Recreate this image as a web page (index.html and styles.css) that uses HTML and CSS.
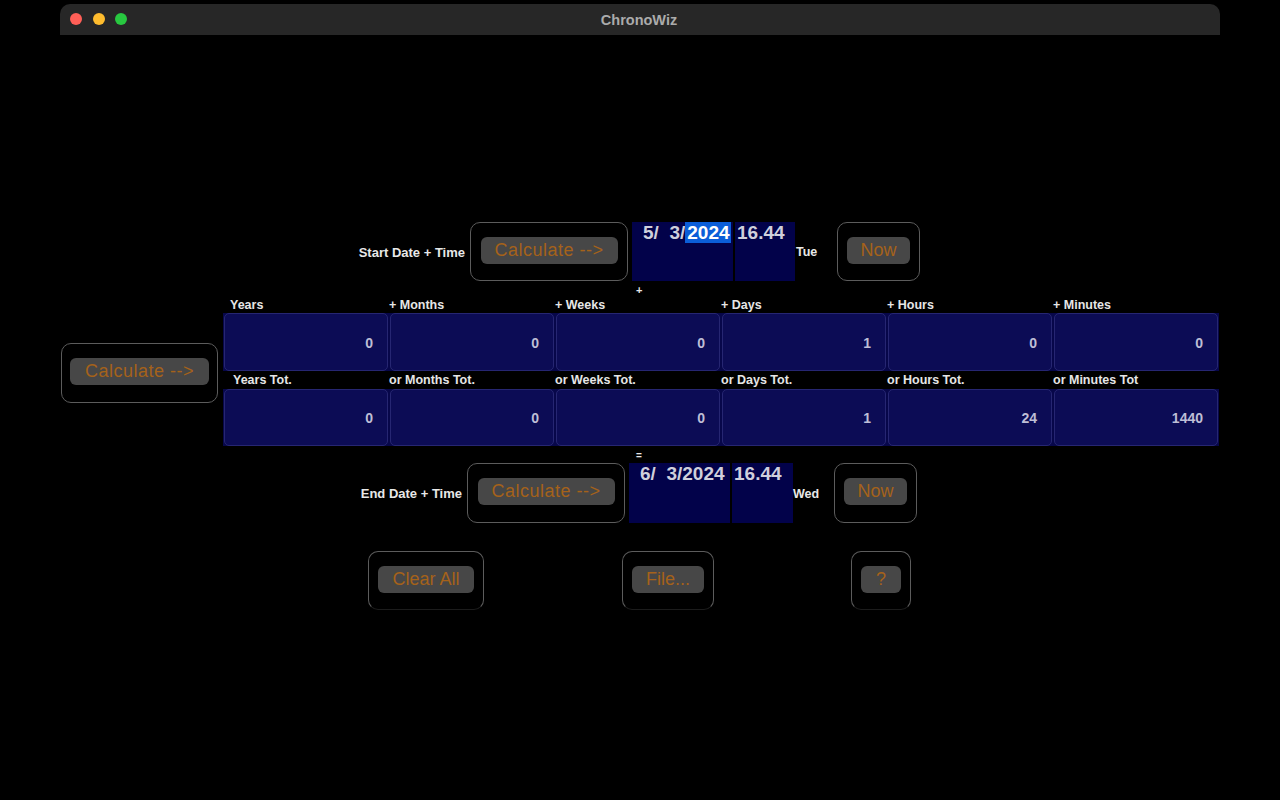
FILE: index.html
```html
<!DOCTYPE html>
<html>
<head>
<meta charset="utf-8">
<title>ChronoWiz</title>
<link rel="stylesheet" href="styles.css">
</head>
<body>
<div class="window">
  <div class="titlebar">
    <div class="lights">
      <span class="light red"></span>
      <span class="light yellow"></span>
      <span class="light green"></span>
    </div>
    <div class="title">ChronoWiz</div>
  </div>
  <div class="content">
    <div class="daterow start">
      <div class="rowlabel">Start Date + Time</div>
      <div class="box calcbox"><button class="btn calc">Calculate --&gt;</button></div>
      <div class="datefields">
        <div class="field date">5/  3/<span class="sel">2024</span></div>
        <div class="field time">16.44</div>
      </div>
      <div class="day">Tue</div>
      <div class="box nowbox"><button class="btn now">Now</button></div>
    </div>
    <div class="sign plus">+</div>

    <div class="middle">
      <div class="box leftcalc"><button class="btn calc wide">Calculate --&gt;</button></div>
      <div class="grid">
        <div class="labels first">
          <div class="lab l1">Years</div>
          <div class="lab">+ Months</div>
          <div class="lab">+ Weeks</div>
          <div class="lab">+ Days</div>
          <div class="lab">+ Hours</div>
          <div class="lab">+ Minutes</div>
        </div>
        <div class="cells">
          <div class="cell">0</div>
          <div class="cell">0</div>
          <div class="cell">0</div>
          <div class="cell">1</div>
          <div class="cell">0</div>
          <div class="cell">0</div>
        </div>
        <div class="labels second">
          <div class="lab l1b">Years Tot.</div>
          <div class="lab">or Months Tot.</div>
          <div class="lab">or Weeks Tot.</div>
          <div class="lab">or Days Tot.</div>
          <div class="lab">or Hours Tot.</div>
          <div class="lab">or Minutes Tot</div>
        </div>
        <div class="cells lower">
          <div class="cell">0</div>
          <div class="cell">0</div>
          <div class="cell">0</div>
          <div class="cell">1</div>
          <div class="cell">24</div>
          <div class="cell">1440</div>
        </div>
      </div>
    </div>

    <div class="sign equals">=</div>
    <div class="daterow end">
      <div class="rowlabel">End Date + Time</div>
      <div class="box calcbox"><button class="btn calc">Calculate --&gt;</button></div>
      <div class="datefields">
        <div class="field date">6/  3/2024</div>
        <div class="field time">16.44</div>
      </div>
      <div class="day">Wed</div>
      <div class="box nowbox"><button class="btn now">Now</button></div>
    </div>

    <div class="bottomrow">
      <div class="box open clearbox"><button class="btn clear">Clear All</button></div>
      <div class="box open filebox"><button class="btn file">File...</button></div>
      <div class="box open helpbox"><button class="btn help">?</button></div>
    </div>
  </div>
</div>
</body>
</html>
```

FILE: styles.css
```css
html, body {
  margin: 0;
  padding: 0;
  background: #000;
}
body {
  font-family: "Liberation Sans", Arial, sans-serif;
  color: #e6e6e6;
  width: 1280px;
  height: 800px;
  overflow: hidden;
}
.window {
  margin-left: 60px;
  margin-top: 4px;
  width: 1160px;
  height: 796px;
  background: #000;
}
.titlebar {
  position: relative;
  height: 31px;
  background: #272727;
  border-radius: 10px 10px 0 0;
  display: flex;
  align-items: center;
  justify-content: center;
}
.lights {
  position: absolute;
  left: 10px;
  top: 9px;
  display: flex;
  gap: 10.5px;
}
.light {
  width: 12px;
  height: 12px;
  border-radius: 50%;
  display: block;
}
.red { background: #ff5f57; }
.yellow { background: #febc2e; }
.green { background: #28c840; }
.title {
  font-size: 14.5px;
  font-weight: bold;
  color: #ababab;
  margin-left: -2px;
}
.content {
  padding-top: 187px;
}

/* boxes & buttons */
.box {
  box-sizing: border-box;
  border: 1px solid #5c5c5c;
  border-radius: 10px;
  display: flex;
  align-items: center;
  justify-content: center;
  padding-bottom: 3px;
}
.box.open {
  border-bottom-color: #1c1c1c;
}
.btn {
  font-family: "Liberation Sans", Arial, sans-serif;
  font-size: 18px;
  color: #a5621a;
  background: #474747;
  border: none;
  border-radius: 6px;
  height: 27px;
  padding: 0;
  margin: 0;
  line-height: 27px;
}
.btn.calc { width: 137px; letter-spacing: 0.5px; }
.btn.calc.wide { width: 139px; }
.btn.now { width: 63px; }
.btn.clear { width: 96px; }
.btn.file { width: 72px; }
.btn.help { width: 40px; }

/* date rows */
.daterow {
  display: flex;
  align-items: stretch;
  height: 59px;
}
.daterow.start { padding-left: 285px; }
.daterow.end { padding-left: 282px; height: 60px; }
.rowlabel {
  width: 120px;
  text-align: right;
  font-size: 13px;
  font-weight: bold;
  color: #e8e8e8;
  display: flex;
  align-items: center;
  justify-content: flex-end;
  padding-top: 1px;
}
.calcbox {
  width: 158px;
  margin-left: 5px;
}
.datefields {
  display: flex;
  gap: 2px;
  margin-left: 4px;
}
.field {
  background: #02024a;
  font-size: 19px;
  font-weight: bold;
  color: #cfcfdc;
  line-height: 22px;
  white-space: pre;
}
.field.date {
  width: 101px;
  box-sizing: border-box;
  padding-left: 11px;
}
.field.time {
  width: 60px;
  box-sizing: border-box;
  padding-left: 2px;
}
.end .field.time { width: 61px; }
.sel {
  background: #0b5ed8;
  color: #fff;
  padding: 0 1px 0 2px;
}
.day {
  width: 42px;
  font-size: 12.5px;
  font-weight: bold;
  color: #e8e8e8;
  display: flex;
  align-items: center;
  padding-left: 1px;
  box-sizing: border-box;
  padding-top: 1px;
}
.end .day { width: 41px; padding-left: 0; padding-top: 2px; }
.nowbox {
  width: 83px;
}

.sign {
  font-size: 11px;
  font-weight: bold;
  color: #e8e8e8;
  padding-left: 576px;
}
.sign.plus { height: 18px; line-height: 18px; }
.sign.equals { height: 17px; line-height: 19px; font-size: 10px; }

/* middle */
.middle {
  display: flex;
  align-items: center;
}
.leftcalc {
  width: 157px;
  height: 60px;
  margin-left: 1px;
  margin-right: 5px;
}
.grid {
  width: 996px;
}
.labels {
  display: grid;
  grid-template-columns: repeat(6, 166px);
  font-size: 12.5px;
  font-weight: bold;
  color: #e6e6e6;
}
.labels.first { height: 14px; line-height: 12px; }
.labels.second { height: 18px; line-height: 18px; }
.lab { padding-left: 0; white-space: nowrap; }
.lab.l1 { padding-left: 7px; }
.lab.l1b { padding-left: 10px; }
.cells {
  display: grid;
  grid-template-columns: repeat(6, 164px);
  gap: 2px;
  background: #07074a;
  padding: 0 1px;
  height: 58px;
}
.cells.lower { height: 57px; }
.cell {
  box-sizing: border-box;
  background: #0c0c55;
  border: 1px solid #262672;
  border-radius: 5px;
  display: flex;
  align-items: center;
  justify-content: flex-end;
  padding-right: 14px;
  font-size: 14px;
  font-weight: bold;
  color: #bebed6;
  padding-top: 1px;
}

/* bottom */
.bottomrow {
  display: flex;
  gap: 138px;
  padding-left: 308px;
  margin-top: 28px;
  height: 59px;
}
.bottomrow .box { height: 59px; }
.clearbox { width: 116px; }
.filebox { width: 92px; }
.helpbox { width: 60px; margin-left: -1px; }
```
